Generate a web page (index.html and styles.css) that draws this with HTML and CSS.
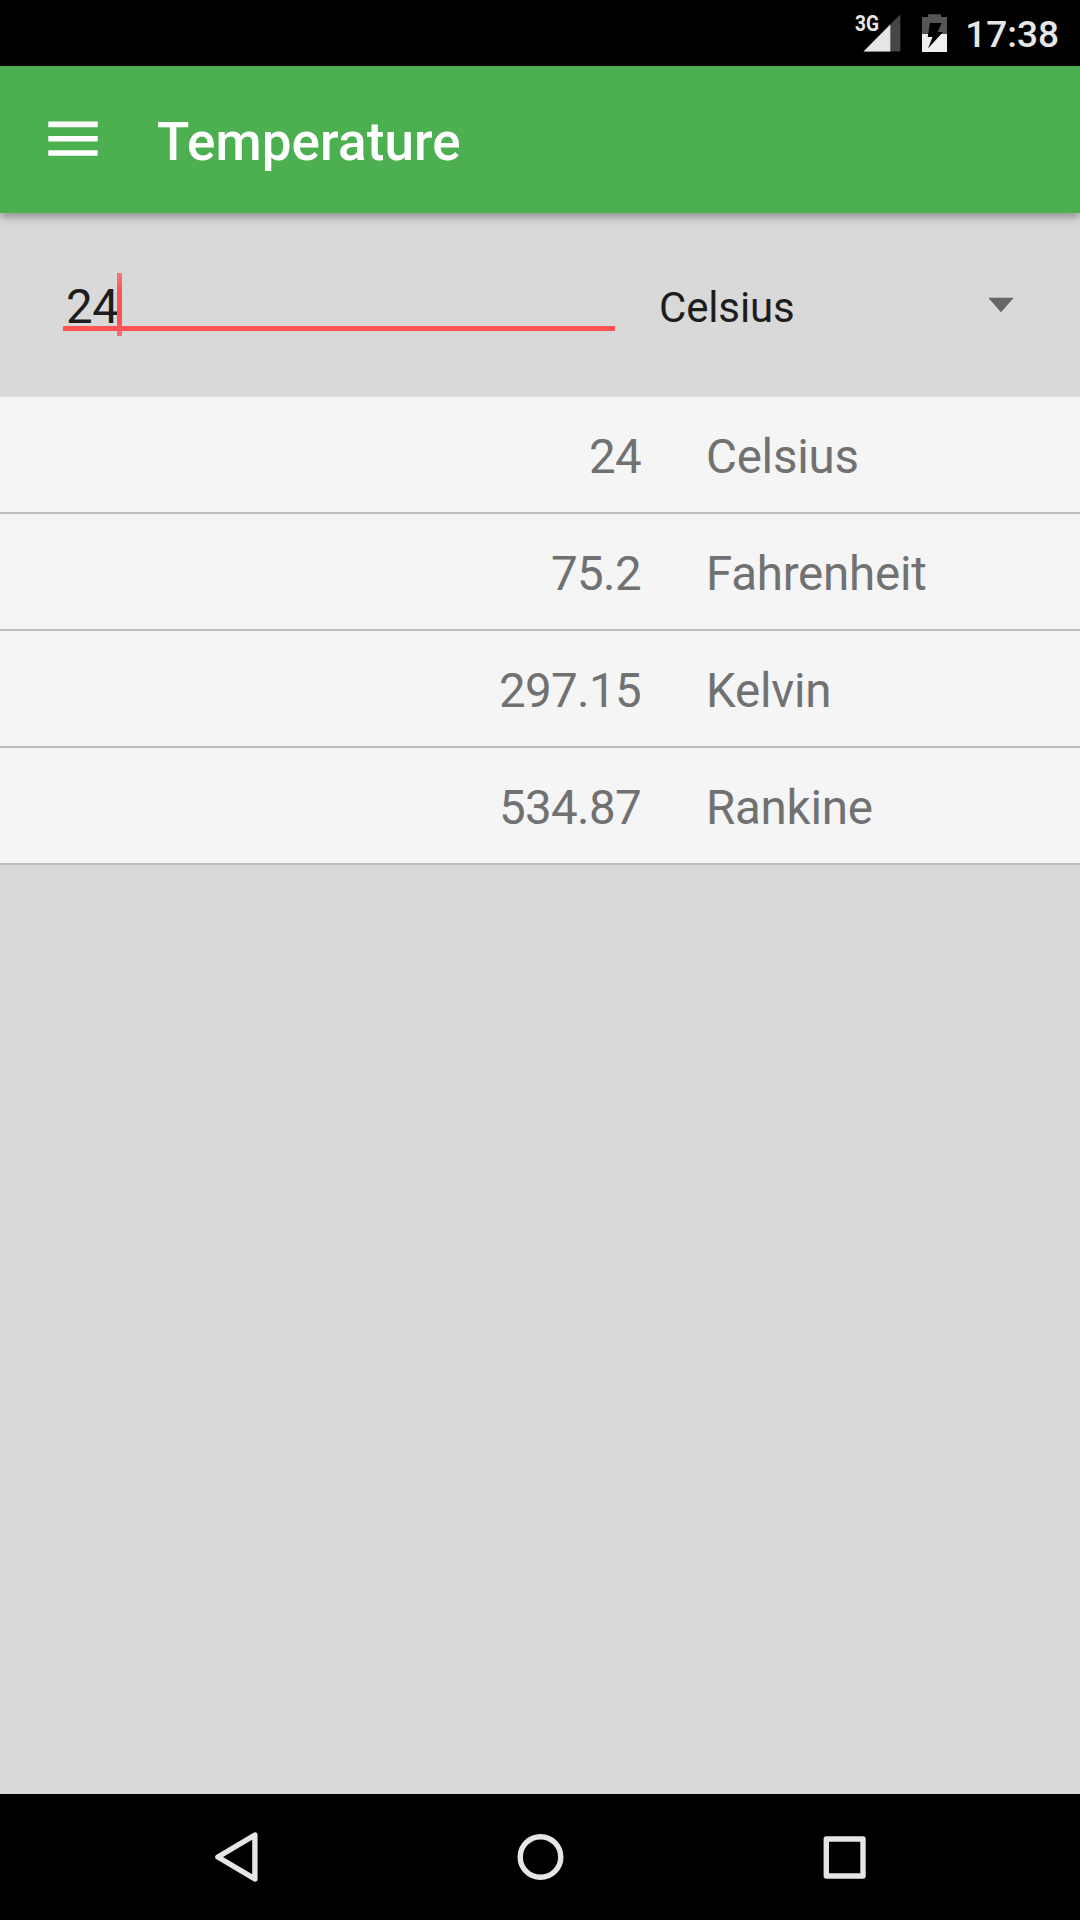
FILE: index.html
```html
<!DOCTYPE html>
<html lang="en">
<head>
<meta charset="utf-8">
<title>Temperature</title>
<link rel="stylesheet" href="styles.css">
</head>
<body>
<div class="screen">
  <div class="status-bar">
    <svg class="status-icons" width="110" height="66" viewBox="850 0 110 66">
      <path d="M863.5 51.5L900.3 14.5V51.5Z" fill="#464646"/>
      <path d="M863.5 51.5L890.3 24.5V51.5Z" fill="#e6e6e6"/>
      <text class="network" x="855" y="31" textLength="24" lengthAdjust="spacingAndGlyphs">3G</text>
      <path d="M922 34V17H928V14.3H941V17H947V34Z" fill="#565656"/>
      <path d="M922 34H947V52H922Z" fill="#f0f0f0"/>
      <path d="M930 23H941.7L937.5 32H943L928 48.5L932.5 37H927.7Z" fill="#000"/>
    </svg>
    <span class="clock">17:38</span>
  </div>
  <header class="app-bar">
    <svg class="menu-icon" width="50" height="35" viewBox="0 0 50 35">
      <path d="M.3 .6H49.7V6.2H.3ZM.3 15.1H49.7V20.6H.3ZM.3 29.3H49.7V34.8H.3Z" fill="#fff"/>
    </svg>
    <h1 class="title">Temperature</h1>
  </header>
  <section class="converter">
    <div class="field"><span class="value">24</span><span class="cursor"></span></div>
    <div class="spinner">
      <span>Celsius</span>
      <svg width="26" height="16" viewBox="0 0 26 16"><path d="M.3 .7H25.7L13 15.2Z" fill="#666"/></svg>
    </div>
  </section>
  <main class="results">
    <div class="row"><span class="amount">24</span><span>Celsius</span></div>
    <div class="row"><span class="amount">75.2</span><span>Fahrenheit</span></div>
    <div class="row"><span class="amount">297.15</span><span>Kelvin</span></div>
    <div class="row"><span class="amount">534.87</span><span>Rankine</span></div>
  </main>
  <nav class="nav-bar">
    <svg width="1080" height="126" viewBox="0 1794 1080 126" fill="none" stroke="#e6e6e6" stroke-width="5.4" stroke-linejoin="round">
      <path d="M217.9 1857L254.9 1835V1879Z"/>
      <circle cx="540.5" cy="1857" r="20.3"/>
      <path d="M826.3 1839H863V1876H826.3Z"/>
    </svg>
  </nav>
</div>
</body>
</html>
```
FILE: styles.css
```css
body {
  margin: 0;
  background: #d9d9d9;
  font-family: Roboto, sans-serif;
}
.screen {
  display: flex;
  flex-direction: column;
  height: 1920px;
  width: 1080px;
}
.status-bar {
  display: flex;
  justify-content: flex-end;
  gap: 5px;
  height: 66px;
  padding-right: 21px;
  background: #000;
  color: #e6e6e6;
}
.network {
  font-size: 21.5px;
  font-weight: 700;
  fill: #e6e6e6;
}
.clock {
  font-size: 37px;
  font-weight: 500;
  line-height: 70px;
}
.app-bar {
  display: flex;
  box-sizing: border-box;
  height: 147px;
  padding-left: 48px;
  gap: 59px;
  background: #4caf50;
  color: #fff;
  box-shadow: 0 4px 9px rgba(0, 0, 0, 0.35);
}
.menu-icon {
  margin-top: 55px;
}
.title {
  margin: 0;
  font-size: 53px;
  font-weight: 500;
  letter-spacing: 0.1px;
  line-height: 152px;
}
.converter {
  display: flex;
  box-sizing: border-box;
  height: 184px;
  padding: 60px 66px 0 63px;
  gap: 44px;
  color: #1d1d1d;
}
.field {
  display: flex;
  box-sizing: border-box;
  width: 552px;
  height: 58px;
  padding-left: 3px;
  border-bottom: 5px solid #ff5252;
  font-size: 47.5px;
  letter-spacing: -0.5px;
  line-height: 69px;
}
.cursor {
  width: 5px;
  height: 63px;
  margin-left: -1px;
  background: linear-gradient(#f07a7a, #ff5252 30%, #ff5252 85%, #f07a7a);
}
.spinner {
  display: flex;
  flex: 1;
  justify-content: space-between;
  font-size: 42px;
  letter-spacing: -0.15px;
  line-height: 69px;
}
.spinner svg {
  margin-top: 24px;
}
.results {
  flex: 1;
}
.row {
  display: grid;
  grid-template-columns: 641px 1fr;
  column-gap: 65px;
  box-sizing: border-box;
  height: 117px;
  border-bottom: 2px solid #bdbdbd;
  background: #f5f5f5;
  color: #717171;
  font-size: 47.5px;
  letter-spacing: -0.25px;
  line-height: 120px;
}
.amount {
  letter-spacing: -0.65px;
  text-align: right;
}
.nav-bar {
  height: 126px;
  background: #000;
}
.nav-bar svg {
  display: block;
}
```
